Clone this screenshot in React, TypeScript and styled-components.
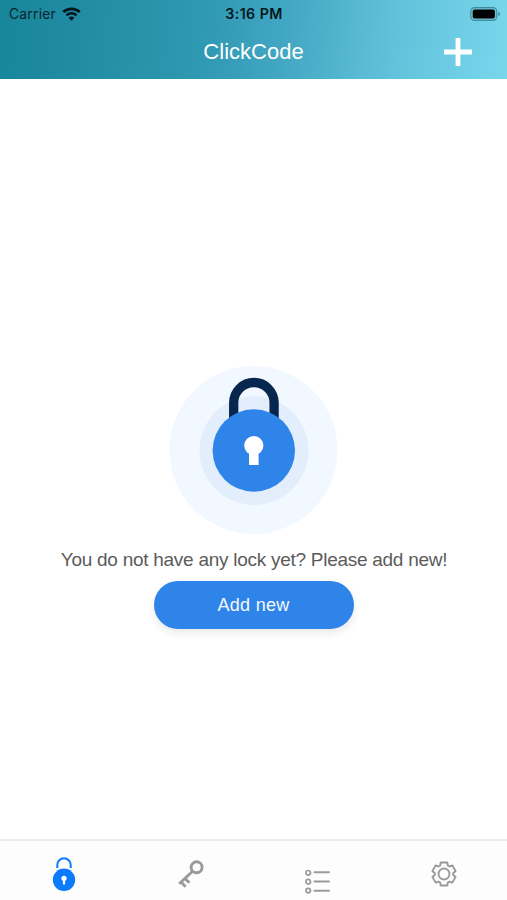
import React from "react";
import styled, { createGlobalStyle } from "styled-components";

const GlobalStyle = createGlobalStyle`
  * { box-sizing: border-box; }
  body { margin: 0; background: #fff; font-family: "Liberation Sans", Arial, sans-serif; }
`;

const Screen = styled.div`
  width: 100%;
  height: 900px;
  display: flex;
  flex-direction: column;
  background: #fff;
  overflow: hidden;
`;

const Header = styled.header`
  height: 79px;
  background: linear-gradient(96deg, #17859a 0%, #2f98b2 40%, #41a6c2 55%, #62c2db 78%, #78d7eb 100%);
`;

const StatusBar = styled.div`
  height: 27px;
  display: grid;
  grid-template-columns: 1fr auto 1fr;
  align-items: center;
  padding: 0 6px 0 9px;
  font-family: Inter, sans-serif;
  font-size: 13.8px;
  color: #05252d;
`;

const Carrier = styled.div`
  display: flex;
  align-items: center;
  gap: 6px;
  letter-spacing: 0.25px;
`;

const Time = styled.div`
  font-weight: 600;
  font-size: 14.2px;
  letter-spacing: 0.45px;
  color: #04171c;
  padding-right: 2px;
`;

const Battery = styled.div`
  display: flex;
  justify-content: flex-end;
`;

const TitleBar = styled.div`
  height: 50px;
  display: grid;
  grid-template-columns: 1fr auto 1fr;
  align-items: center;
  padding: 0 35px;
`;

const Title = styled.h1`
  grid-column: 2;
  margin: 0;
  font-size: 22px;
  line-height: 26px;
  font-weight: 400;
  color: #fff;
`;

const AddButton = styled.button`
  justify-self: end;
  display: flex;
  padding: 0;
  border: 0;
  background: none;
`;

const Empty = styled.main`
  flex: 1;
  display: flex;
  flex-direction: column;
  align-items: center;
  padding-top: 286px;
`;

const Message = styled.p`
  margin: 13px 0 9px;
  padding-left: 1px;
  height: 24px;
  line-height: 24px;
  font-size: 19px;
  letter-spacing: -0.27px;
  color: #5b5b5b;
  white-space: nowrap;
`;

const PrimaryButton = styled.button`
  width: 200px;
  height: 48px;
  padding: 0;
  border: 0;
  border-radius: 24px;
  background: #2f84e9;
  color: #f3f9ff;
  font-family: inherit;
  font-size: 18px;
  letter-spacing: 0.3px;
  box-shadow: 0 4px 8px rgba(0, 0, 0, 0.09);
`;

const TabBar = styled.nav`
  height: 61px;
  display: grid;
  grid-template-columns: repeat(4, 1fr);
  border-top: 2px solid #ececec;
  background: #fdfdfd;
`;

const Tab = styled.button<{ $active?: boolean; $top: number }>`
  display: flex;
  justify-content: center;
  align-items: flex-start;
  padding: ${(p) => p.$top}px 0 0 1px;
  border: 0;
  background: none;
  color: ${(p) => (p.$active ? "#0a7cfb" : "#9a9a9a")};
`;

const WifiIcon = () => (
  <svg width="19" height="14" viewBox="0 0 19 14" fill="none" stroke="#04171c">
    <path d="M1.3 5.1C5.8.7 13.2.7 17.7 5.1" strokeWidth="2.8" />
    <path d="M4.4 8.3c2.8-2.8 7.4-2.8 10.2 0" strokeWidth="2.5" />
    <path d="M6.6 10.8a4 4 0 0 1 5.8 0L9.5 13.8z" fill="#04171c" stroke="none" />
  </svg>
);

const BatteryIcon = () => (
  <svg width="31" height="14" viewBox="0 0 31 14">
    <rect x=".8" y=".6" width="26" height="12.8" rx="3.8" fill="#6fc3d5" stroke="#418b9b" strokeWidth="1.1" />
    <rect x="2.7" y="2.5" width="22.2" height="9" rx="2" fill="#000" />
    <path d="M28.3 4.8q1.8.8 1.8 2.2t-1.8 2.2z" fill="#418b9b" />
  </svg>
);

const PlusIcon = () => (
  <svg width="28" height="28" viewBox="0 0 28 28">
    <path d="M14 0v28M0 14h28" stroke="#fff" strokeWidth="4.8" />
  </svg>
);

const LockArt = () => (
  <svg width="170" height="170" viewBox="0 0 170 170">
    <circle cx="84.5" cy="85" r="84" fill="#f2f8ff" />
    <circle cx="85" cy="85.5" r="54.5" fill="#e2eefb" />
    <path d="M64.7 65V37.7a20.2 20.2 0 0 1 40.4 0V65" fill="none" stroke="#08274f" strokeWidth="9.3" />
    <circle cx="84.8" cy="85.5" r="41.2" fill="#2f84e9" />
    <circle cx="84.8" cy="80.5" r="9.6" fill="#fff" />
    <path d="M80 85h9.6v15H80z" fill="#fff" />
  </svg>
);

const LockIcon = () => (
  <svg width="24" height="35" viewBox="0 0 24 35">
    <path d="M5.3 11V8a6.7 6.7 0 0 1 13.4 0v3" fill="none" stroke="currentColor" strokeWidth="2" />
    <circle cx="12" cy="22.8" r="11.2" fill="currentColor" />
    <circle cx="12" cy="21.3" r="2.6" fill="#fff" />
    <path d="M10.9 22.5h2.2v5h-2.2z" fill="#fff" />
  </svg>
);

const KeyIcon = () => (
  <svg width="26" height="28" viewBox="0 0 26 28" fill="none" stroke="currentColor" strokeWidth="2.9">
    <circle cx="18.6" cy="7.3" r="5.5" />
    <path d="M14.6 11.3 1.2 23.8M2.4 21.3l5.2 5.4M6.4 18l5 4.8" />
  </svg>
);

const ListIcon = () => (
  <svg width="25" height="25" viewBox="0 0 25 25" fill="none" stroke="currentColor">
    <g strokeWidth="1.7">
      <circle cx="3.2" cy="3.8" r="2.3" />
      <circle cx="3.2" cy="12.7" r="2.3" />
      <circle cx="3.2" cy="21.6" r="2.3" />
    </g>
    <path d="M9.5 3.3H24M9.5 12.5H24M9.5 21.8H24" strokeWidth="2" strokeLinecap="round" />
  </svg>
);

const gearOutline = Array.from({ length: 6 }, (_, tooth) =>
  [[-24, 9.3], [-16, 12], [16, 12], [24, 9.3]].map(([offset, radius]) => {
    const angle = ((tooth * 60 + offset - 90) * Math.PI) / 180;
    return `${(13 + radius * Math.cos(angle)).toFixed(2)},${(13 + radius * Math.sin(angle)).toFixed(2)}`;
  }).join(" ")
).join(" ");

const GearIcon = () => (
  <svg width="26" height="26" viewBox="0 0 26 26" fill="none" stroke="currentColor" strokeWidth="1.9" strokeLinejoin="round">
    <polygon points={gearOutline} />
    <circle cx="13" cy="13" r="5.5" />
  </svg>
);

export default function App() {
  return (
    <>
      <GlobalStyle />
      <Screen>
        <Header>
          <StatusBar>
            <Carrier>Carrier <WifiIcon /></Carrier>
            <Time>3:16 PM</Time>
            <Battery><BatteryIcon /></Battery>
          </StatusBar>
          <TitleBar>
            <Title>ClickCode</Title>
            <AddButton aria-label="Add"><PlusIcon /></AddButton>
          </TitleBar>
        </Header>
        <Empty>
          <LockArt />
          <Message>You do not have any lock yet? Please add new!</Message>
          <PrimaryButton>Add new</PrimaryButton>
        </Empty>
        <TabBar>
          <Tab $active $top={16} aria-label="Locks"><LockIcon /></Tab>
          <Tab $top={19} aria-label="Keys"><KeyIcon /></Tab>
          <Tab $top={28} aria-label="History"><ListIcon /></Tab>
          <Tab $top={20} aria-label="Settings"><GearIcon /></Tab>
        </TabBar>
      </Screen>
    </>
  );
}
